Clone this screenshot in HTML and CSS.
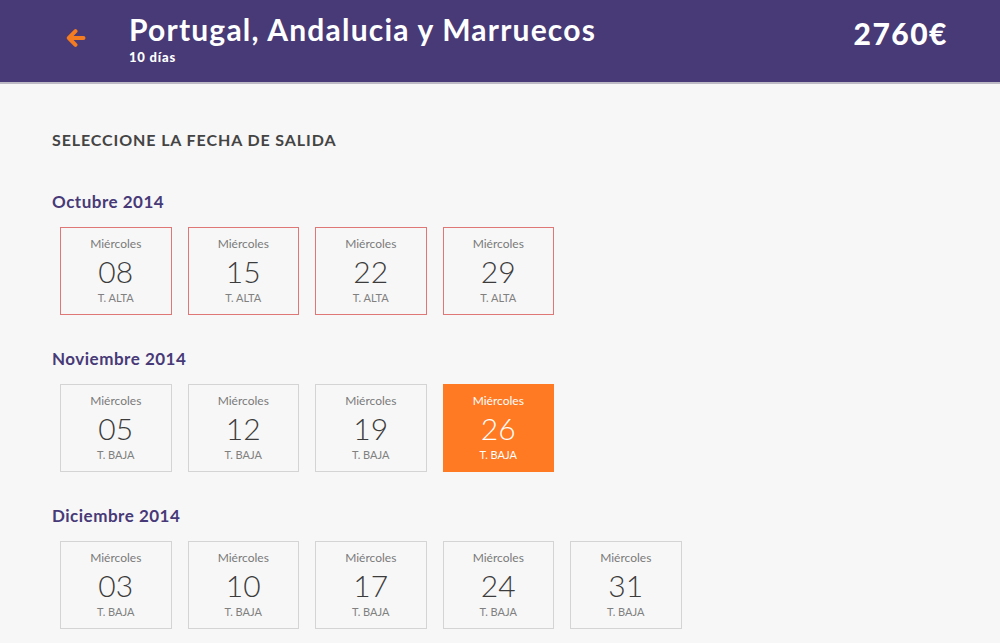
FILE: index.html
```html
<!doctype html>
<html lang="es">
<head>
    <meta charset="utf-8">
    <title>Portugal, Andalucia y Marruecos | Fecha de salida</title>
    <meta name="viewport" content="width=device-width, initial-scale=1.0">
    <link rel="stylesheet" href="styles.css">
</head>
<body>
    <header class="topbar">
        <a class="back-btn" href="#">
            <svg width="20" height="18" viewBox="0 0 20 18"><path d="M9.5 2.2 L2.8 9 L9.5 15.8 M2.8 9 H17.5" fill="none" stroke="#f47b20" stroke-width="4" stroke-linecap="round" stroke-linejoin="round"/></svg>
        </a>
        <div class="trip">
            <h1>Portugal, Andalucia y Marruecos</h1>
            <div class="trip-days">10 días</div>
        </div>
        <div class="price">2760€</div>
    </header>

    <main class="content">
        <h2 class="page-title">SELECCIONE LA FECHA DE SALIDA</h2>

        <section class="month">
            <h3>Octubre 2014</h3>
            <div class="dates">
                <div class="date high"><span class="weekday">Miércoles</span><span class="day">08</span><span class="season">T. ALTA</span></div>
                <div class="date high"><span class="weekday">Miércoles</span><span class="day">15</span><span class="season">T. ALTA</span></div>
                <div class="date high"><span class="weekday">Miércoles</span><span class="day">22</span><span class="season">T. ALTA</span></div>
                <div class="date high"><span class="weekday">Miércoles</span><span class="day">29</span><span class="season">T. ALTA</span></div>
            </div>
        </section>

        <section class="month">
            <h3>Noviembre 2014</h3>
            <div class="dates">
                <div class="date"><span class="weekday">Miércoles</span><span class="day">05</span><span class="season">T. BAJA</span></div>
                <div class="date"><span class="weekday">Miércoles</span><span class="day">12</span><span class="season">T. BAJA</span></div>
                <div class="date"><span class="weekday">Miércoles</span><span class="day">19</span><span class="season">T. BAJA</span></div>
                <div class="date selected"><span class="weekday">Miércoles</span><span class="day">26</span><span class="season">T. BAJA</span></div>
            </div>
        </section>

        <section class="month">
            <h3>Diciembre 2014</h3>
            <div class="dates">
                <div class="date"><span class="weekday">Miércoles</span><span class="day">03</span><span class="season">T. BAJA</span></div>
                <div class="date"><span class="weekday">Miércoles</span><span class="day">10</span><span class="season">T. BAJA</span></div>
                <div class="date"><span class="weekday">Miércoles</span><span class="day">17</span><span class="season">T. BAJA</span></div>
                <div class="date"><span class="weekday">Miércoles</span><span class="day">24</span><span class="season">T. BAJA</span></div>
                <div class="date"><span class="weekday">Miércoles</span><span class="day">31</span><span class="season">T. BAJA</span></div>
            </div>
        </section>
    </main>
</body>
</html>
```

FILE: styles.css
```css
body {
    margin: 0;
    background-color: #f7f7f7;
    color: #444;
    font-family: 'Lato', 'Open Sans', sans-serif;
}
.topbar {
    display: flex;
    align-items: flex-start;
    height: 82px;
    background-color: #473a77;
    border-bottom: 2px solid #bdbac6;
    padding: 0 52px 0 66px;
    color: #fff;
}
.back-btn {
    display: flex;
    margin-top: 29px;
    width: 63px;
}
.trip {
    flex: 1;
    padding-top: 12px;
}
.trip h1 {
    margin: 0;
    font-size: 30px;
    line-height: 34px;
    font-weight: 700;
    letter-spacing: 1.2px;
}
.trip-days {
    margin-top: 4px;
    font-size: 13px;
    font-weight: 900;
    line-height: 14px;
    letter-spacing: 0.8px;
}
.price {
    margin-top: 15px;
    font-size: 30px;
    font-weight: 900;
    line-height: 36px;
    letter-spacing: 1.5px;
}
.content {
    padding: 46px 52px 0;
}
.page-title {
    margin: 0 0 42px;
    font-size: 16px;
    line-height: 20px;
    font-weight: 700;
    letter-spacing: 0.9px;
    color: #444;
}
.month {
    margin-bottom: 34px;
}
.month h3 {
    margin: 0 0 15px;
    font-size: 17px;
    line-height: 20px;
    font-weight: 700;
    letter-spacing: 0.5px;
    color: #473a77;
}
.dates {
    display: flex;
    gap: 16px;
    padding-left: 8px;
}
.date {
    display: flex;
    flex-direction: column;
    align-items: center;
    box-sizing: border-box;
    width: 111.5px;
    height: 88px;
    padding-top: 9px;
    border: 1px solid #d4d4d4;
    color: #555;
}
.date.high {
    border-color: #e07777;
}
.date.selected {
    background-color: #ff7a22;
    border-color: #ff7a22;
    color: #fff;
}
.weekday {
    font-size: 12px;
    line-height: 14px;
    color: #7a7a7a;
}
.day {
    margin-top: 4px;
    font-size: 30px;
    font-weight: 300;
    line-height: 32px;
    color: #3c3c3c;
}
.season {
    margin-top: 5px;
    font-size: 11px;
    line-height: 12px;
    color: #808080;
}
.date.selected .weekday,
.date.selected .day,
.date.selected .season {
    color: #fff;
}
```
